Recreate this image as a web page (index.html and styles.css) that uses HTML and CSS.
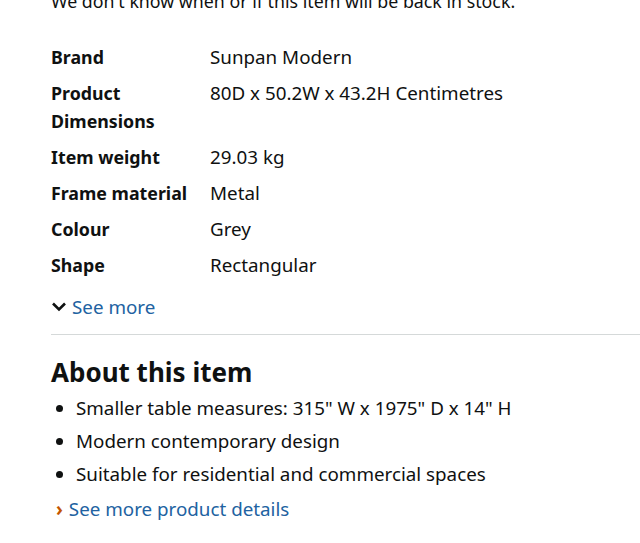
FILE: index.html
```html
<!DOCTYPE html>
<html>
<head>
<meta charset="utf-8">
<link rel="stylesheet" href="styles.css">
</head>
<body>
<div class="page">
  <p class="stock">We don't know when or if this item will be back in stock.</p>
  <div class="specs">
    <div class="label">Brand</div><div class="value">Sunpan Modern</div>
    <div class="label">Product Dimensions</div><div class="value">80D x 50.2W x 43.2H Centimetres</div>
    <div class="label">Item weight</div><div class="value">29.03 kg</div>
    <div class="label">Frame material</div><div class="value">Metal</div>
    <div class="label">Colour</div><div class="value">Grey</div>
    <div class="label">Shape</div><div class="value">Rectangular</div>
  </div>
  <a class="see-more"><svg class="chev-down" viewBox="0 0 16 12" width="16" height="12"><path d="M2 2.5 L8 8.5 L14 2.5" fill="none" stroke="#0f1111" stroke-width="2.6"/></svg>See more</a>
  <hr class="divider">
  <h2 class="about">About this item</h2>
  <ul class="bullets">
    <li>Smaller table measures: 315" W x 1975" D x 14" H</li>
    <li>Modern contemporary design</li>
    <li>Suitable for residential and commercial spaces</li>
  </ul>
  <a class="details"><span class="chev-right">›</span>See more product details</a>
</div>
</body>
</html>
```
FILE: styles.css
```css
html, body {
  margin: 0;
  padding: 0;
  background: #fff;
}
body {
  font-family: "Noto Sans", "Open Sans", sans-serif;
  color: #0f1111;
  font-size: 18.8px;
  line-height: 28px;
  overflow: hidden;
}
.page {
  padding-left: 51px;
}
.stock {
  margin: -13px 0 28px;
  font-size: 17.8px;
}
.specs {
  display: grid;
  grid-template-columns: 159px 1fr;
  row-gap: 8px;
}
.label {
  font-weight: 700;
  font-size: 17.8px;
  padding-right: 8px;
}
.see-more {
  display: flex;
  align-items: center;
  margin-top: 14px;
  color: #2162a1;
  height: 28px;
}
.chev-down {
  margin-right: 5px;
}
.divider {
  border: 0;
  border-top: 1px solid #d5d9d9;
  margin: 13px 0 0;
}
.about {
  margin: 19px 0 4px;
  font-size: 26px;
  line-height: 36px;
  font-weight: 700;
}
.bullets {
  margin: 0;
  padding-left: 25px;
  list-style: disc;
}
.bullets li {
  margin-bottom: 5px;
}
.details {
  display: block;
  margin-top: 7px;
  color: #2162a1;
  padding-left: 5px;
}
.chev-right {
  color: #c45500;
  font-weight: 700;
  margin-right: 6px;
}
```
